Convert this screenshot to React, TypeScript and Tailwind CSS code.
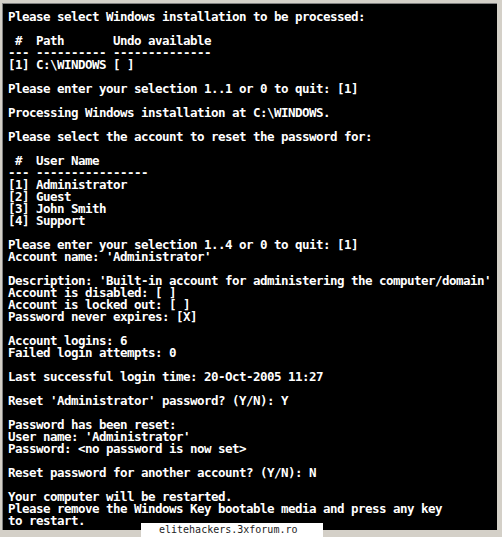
import React from "react";

// console output, one entry per row of the screen
const lines: string[] = [
  "Please select Windows installation to be processed:",
  "",
  " #  Path       Undo available",
  "--- ---------- --------------",
  "[1] C:\\WINDOWS [ ]",
  "",
  "Please enter your selection 1..1 or 0 to quit: [1]",
  "",
  "Processing Windows installation at C:\\WINDOWS.",
  "",
  "Please select the account to reset the password for:",
  "",
  " #  User Name",
  "--- ----------------",
  "[1] Administrator",
  "[2] Guest",
  "[3] John Smith",
  "[4] Support",
  "",
  "Please enter your selection 1..4 or 0 to quit: [1]",
  "Account name: 'Administrator'",
  "",
  "Description: 'Built-in account for administering the computer/domain'",
  "Account is disabled: [ ]",
  "Account is locked out: [ ]",
  "Password never expires: [X]",
  "",
  "Account logins: 6",
  "Failed login attempts: 0",
  "",
  "Last successful login time: 20-Oct-2005 11:27",
  "",
  "Reset 'Administrator' password? (Y/N): Y",
  "",
  "Password has been reset:",
  "User name: 'Administrator'",
  "Password: <no password is now set>",
  "",
  "Reset password for another account? (Y/N): N",
  "",
  "Your computer will be restarted.",
  "Please remove the Windows Key bootable media and press any key",
  "to restart.",
];

const App: React.FC = () => {
  return (
    <div className="relative w-[502px] h-[537px] bg-[#d4d0c8] pt-[3px] pl-[2px] pr-[5px] pb-[7px] overflow-hidden">
      {/* Console area */}
      <div className="h-full bg-black border-t border-l border-[#808080] pt-[7px] pl-[5px]">
        <pre className="m-0 w-fit text-white font-bold text-[12.5px] leading-[12px] tracking-[-0.525px] whitespace-pre font-['DejaVu_Sans_Mono',monospace]">
          {lines.join("\n")}
        </pre>
      </div>

      {/* Watermark over the bottom edge */}
      <div className="absolute left-[141px] top-[523px] w-[182px] h-[14px] bg-white pl-[18px] flex items-center">
        <span className="text-[10px] leading-none text-[#222] font-['DejaVu_Sans_Mono',monospace]">
          elitehackers.3xforum.ro
        </span>
      </div>
    </div>
  );
};

export default App;
